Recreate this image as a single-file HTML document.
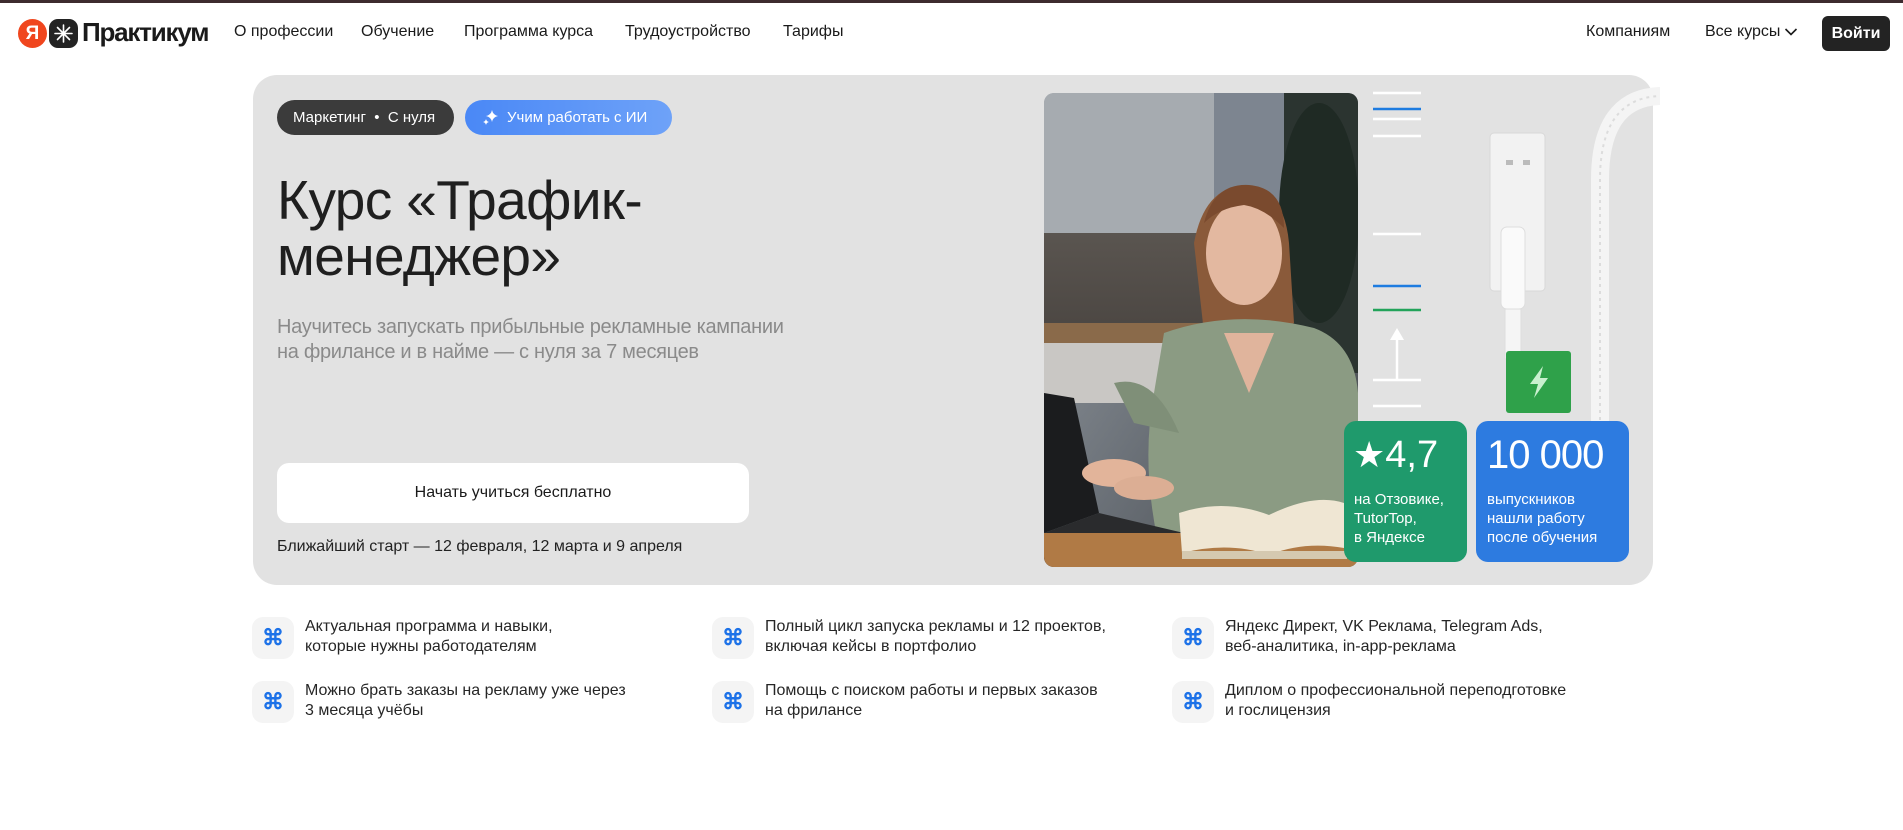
<!DOCTYPE html>
<html><head><meta charset="utf-8">
<style>
*{margin:0;padding:0;box-sizing:border-box}
body{width:1903px;height:830px;background:#fff;font-family:"Liberation Sans",sans-serif;color:#1a1a1a;position:relative;overflow:hidden}
.abs{position:absolute}
.topbar{left:0;top:0;width:1903px;height:3px;background:#3d2b2f}
.nav{font-size:16px;top:23px;white-space:nowrap;color:#1a1a1a}
.card{left:253px;top:75px;width:1400px;height:510px;background:#e2e2e2;border-radius:24px;overflow:hidden}
.pill{height:35px;border-radius:18px;font-size:15px;line-height:35px;white-space:nowrap;color:#fff}
.title{left:277px;top:172px;font-size:55px;line-height:56px;letter-spacing:-0.6px;color:#1f1f1f;white-space:nowrap}
.sub{left:277px;top:315px;font-size:20px;line-height:25px;color:#8a8a8a;white-space:nowrap;letter-spacing:-0.3px}
.btn{left:277px;top:463px;width:472px;height:60px;background:#fff;border-radius:12px;text-align:center;line-height:60px;font-size:16px;color:#1a1a1a}
.start{left:277px;top:538px;font-size:16px;color:#222;white-space:nowrap}
.feat{width:42px;height:42px;background:#f4f4f4;border-radius:11px;color:#1d72e8;font-size:22px;text-align:center;line-height:42px;font-weight:bold}
.ft{font-size:16px;line-height:20px;color:#262626;white-space:nowrap}
.stat{border-radius:12px;color:#fff}
</style></head><body>
<div class="abs topbar"></div>

<div class="abs" style="left:18px;top:19px;width:29px;height:29px;border-radius:50%;background:#f0461e;color:#fff;font-size:19px;font-weight:bold;text-align:center;line-height:29px">Я</div>
<div class="abs" style="left:49px;top:19px;width:29px;height:29px;border-radius:9px;background:#232323"></div>
<svg class="abs" style="left:49px;top:19px" width="29" height="29" viewBox="0 0 29 29"><g stroke="#fff" stroke-width="1.6" stroke-linecap="round"><path d="M14.5 6v17M6 14.5h17M8.5 8.5l12 12M20.5 8.5l-12 12"/></g></svg>
<div class="abs" style="left:82px;top:17px;font-size:26px;font-weight:bold;letter-spacing:-1.2px;color:#1a1a1a">Практикум</div>

<div class="abs nav" style="left:234px">О профессии</div>
<div class="abs nav" style="left:361px">Обучение</div>
<div class="abs nav" style="left:464px">Программа курса</div>
<div class="abs nav" style="left:625px">Трудоустройство</div>
<div class="abs nav" style="left:783px">Тарифы</div>
<div class="abs nav" style="left:1586px">Компаниям</div>
<div class="abs nav" style="left:1705px">Все курсы</div>
<svg class="abs" style="left:1784px;top:27px" width="14" height="10" viewBox="0 0 14 10"><path d="M1.5 2l5.5 5.5L12.5 2" fill="none" stroke="#1a1a1a" stroke-width="1.6"/></svg>
<div class="abs" style="left:1822px;top:16px;width:68px;height:35px;background:#232323;border-radius:6px;color:#fff;font-size:16px;font-weight:bold;text-align:center;line-height:35px">Войти</div>

<div class="abs card"></div>
<div class="abs pill" style="left:277px;top:100px;width:177px;background:#3b3b3b;padding-left:16px">Маркетинг &nbsp;•&nbsp; С нуля</div>
<div class="abs pill" style="left:465px;top:100px;width:207px;background:linear-gradient(90deg,#4a88f6,#6ea2f8);padding-left:42px">Учим работать с ИИ</div>
<svg class="abs" style="left:482px;top:108px" width="18" height="18" viewBox="0 0 18 18"><path d="M10 2 Q11 7 16 8 Q11 9 10 14 Q9 9 4 8 Q9 7 10 2Z" fill="#fff"/><path d="M4 11 Q4.5 13.5 7 14 Q4.5 14.5 4 17 Q3.5 14.5 1 14 Q3.5 13.5 4 11Z" fill="#fff"/></svg>

<div class="abs title">Курс «Трафик-<br>менеджер»</div>
<div class="abs sub">Научитесь запускать прибыльные рекламные кампании<br>на фрилансе и в найме — с нуля за 7 месяцев</div>
<div class="abs btn">Начать учиться бесплатно</div>
<div class="abs start">Ближайший старт — 12 февраля, 12 марта и 9 апреля</div>

<svg class="abs" style="left:1044px;top:93px;border-radius:10px" width="314" height="474" viewBox="0 0 314 474">
<defs>
<linearGradient id="bg" x1="0" y1="0" x2="1" y2="1"><stop offset="0" stop-color="#9ea4aa"/><stop offset="0.5" stop-color="#6d737a"/><stop offset="1" stop-color="#3f4246"/></linearGradient>
<linearGradient id="wall" x1="0" y1="0" x2="0" y2="1"><stop offset="0" stop-color="#5a5550"/><stop offset="1" stop-color="#4a4541"/></linearGradient>
</defs>
<rect width="314" height="474" fill="url(#bg)"/>
<rect x="0" y="0" width="170" height="140" fill="#a6abb0"/>
<rect x="170" y="0" width="70" height="170" fill="#7d8590"/>
<rect x="0" y="140" width="170" height="110" fill="url(#wall)"/>
<rect x="240" y="0" width="74" height="280" fill="#2b3430"/>
<ellipse cx="275" cy="120" rx="40" ry="110" fill="#1f2a24"/>
<rect x="0" y="230" width="160" height="20" fill="#8a6a4a"/>
<rect x="0" y="250" width="160" height="60" fill="#c9c7c4"/>
<path d="M150 150 Q160 95 200 92 Q240 95 245 150 L250 230 L235 240 L160 240 Z" fill="#8a5a3a"/>
<ellipse cx="200" cy="160" rx="38" ry="52" fill="#e3b8a0"/>
<path d="M160 130 Q170 90 205 92 Q240 95 240 135 Q220 115 200 112 Q175 115 160 130Z" fill="#7a4a2e"/>
<path d="M120 240 Q190 215 270 235 Q310 250 314 300 L314 474 L120 474 Q95 380 110 300 Z" fill="#8b9b83"/>
<path d="M180 240 L205 300 L230 240" fill="#e0b49c"/>
<path d="M70 290 Q110 280 135 340 L90 330 Z" fill="#7f8f78"/>
<path d="M0 300 L30 305 L55 420 L0 440 Z" fill="#1b1c1e"/>
<path d="M0 440 L55 420 L140 440 L130 470 L0 474 Z" fill="#2a2b2d"/>
<ellipse cx="70" cy="380" rx="32" ry="14" fill="#e2b49a"/>
<ellipse cx="100" cy="395" rx="30" ry="12" fill="#dcae94"/>
<rect x="0" y="440" width="314" height="34" fill="#b07a45"/>
<path d="M135 420 Q180 405 225 422 Q270 400 300 410 L300 455 Q260 448 225 462 Q185 448 138 460 Z" fill="#efe6d3"/>
<rect x="138" y="458" width="165" height="8" fill="#d5c9b0"/>
</svg>

<svg class="abs" style="left:1360px;top:80px" width="300" height="500" viewBox="0 0 300 500">
<g stroke-width="2.5">
<path d="M13 13h48M13 39h48M13 56h48M13 154h48M13 300h48M13 326h48" stroke="#fff"/>
<path d="M13 29h48M13 206h48" stroke="#1e7ce0"/>
<path d="M13 230h48" stroke="#22a35a"/>
<path d="M37 300v-45" stroke="#fff"/>
</g>
<path d="M30 260l7-12 7 12z" fill="#fff"/>
<path d="M240 340 L240 100 Q240 18 300 16" fill="none" stroke="#f4f4f4" stroke-width="18" stroke-linecap="round"/>
<path d="M240 340 L240 100 Q240 18 300 16" fill="none" stroke="#dcdcdc" stroke-width="2" stroke-dasharray="3 4"/>
<rect x="130" y="53" width="55" height="158" rx="4" fill="#f2f2f2" stroke="#d8d8d8"/>
<rect x="146" y="80" width="7" height="5" fill="#bbb"/><rect x="163" y="80" width="7" height="5" fill="#bbb"/>
<rect x="141" y="147" width="24" height="82" rx="6" fill="#fafafa" stroke="#ddd"/>
<rect x="145" y="229" width="16" height="50" fill="#f5f5f5" stroke="#ddd"/>
<rect x="146" y="271" width="65" height="62" rx="3" fill="#2fa14a"/>
<path d="M183 286 L170 304 L178 304 L174 318 L188 298 L180 298 Z" fill="#c9f0cf"/>
</svg>

<div class="abs stat" style="left:1344px;top:421px;width:123px;height:141px;background:#1f9a6c">
 <div style="position:absolute;left:9px;top:14px;font-size:38px;line-height:40px;white-space:nowrap"><span style="font-size:36px">★</span>4,7</div>
 <div style="position:absolute;left:10px;top:69px;font-size:15px;line-height:19px;white-space:nowrap">на Отзовике,<br>TutorTop,<br>в Яндексе</div>
</div>
<div class="abs stat" style="left:1476px;top:421px;width:153px;height:141px;background:#2d7be0">
 <div style="position:absolute;left:11px;top:14px;font-size:40px;line-height:40px;white-space:nowrap;letter-spacing:-1px">10 000</div>
 <div style="position:absolute;left:11px;top:69px;font-size:15px;line-height:19px;white-space:nowrap">выпускников<br>нашли работу<br>после обучения</div>
</div>

<div class="abs feat" style="left:252px;top:617px">⌘</div>
<div class="abs ft" style="left:305px;top:617px">Актуальная программа и навыки,<br>которые нужны работодателям</div>
<div class="abs feat" style="left:252px;top:681px">⌘</div>
<div class="abs ft" style="left:305px;top:681px">Можно брать заказы на рекламу уже через<br>3 месяца учёбы</div>
<div class="abs feat" style="left:712px;top:617px">⌘</div>
<div class="abs ft" style="left:765px;top:617px">Полный цикл запуска рекламы и 12 проектов,<br>включая кейсы в портфолио</div>
<div class="abs feat" style="left:712px;top:681px">⌘</div>
<div class="abs ft" style="left:765px;top:681px">Помощь с поиском работы и первых заказов<br>на фрилансе</div>
<div class="abs feat" style="left:1172px;top:617px">⌘</div>
<div class="abs ft" style="left:1225px;top:617px">Яндекс Директ, VK Реклама, Telegram Ads,<br>веб-аналитика, in-app-реклама</div>
<div class="abs feat" style="left:1172px;top:681px">⌘</div>
<div class="abs ft" style="left:1225px;top:681px">Диплом о профессиональной переподготовке<br>и гослицензия</div>
</body></html>
